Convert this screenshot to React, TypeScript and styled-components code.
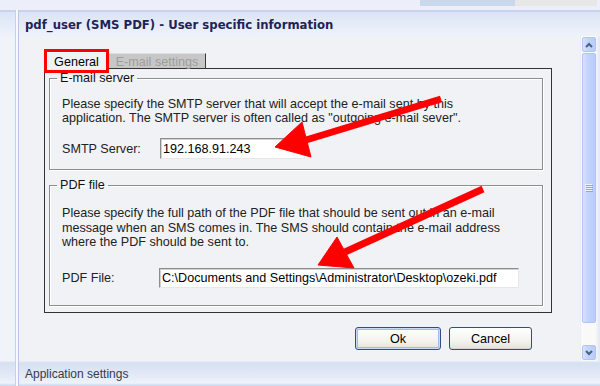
import React from 'react'
import styled, { createGlobalStyle } from 'styled-components'

const Global = createGlobalStyle`
  html, body {
    margin:0;
    padding:0;
  }
  body {
    width:600px;
    height:386px;
    overflow:hidden;
    background:#eef0f9;
    font-family:"Liberation Sans", Arial, sans-serif;
  }
`

const Page = styled.div`
  position:relative;
  width:600px;
  height:386px;
  display:flex;
  flex-direction:column;
  overflow:hidden;
`

const TopStrip = styled.div`
  height:10px;
  flex:none;
  display:flex;
  justify-content:flex-end;
  padding-right:3px;
  background:#eceef9;
`
const TopTab = styled.div<{ $w: number; $bg: string }>`
  width:${(p) => p.$w}px;
  height:6px;
  background:${(p) => p.$bg};
`

const Body = styled.div`
  flex:1;
  display:flex;
  min-height:0;
`

const LeftPane = styled.div`
  width:15px;
  display:flex;
  flex-direction:column;
  background:#f1f3fa;
`
const PaneHead = styled.div`
  height:26px;
  flex:none;
  background:linear-gradient(#c6d4ee 0, #c6d4ee 2px, #dbe4f6 2px, #eef2fa 100%);
`
const PaneFill = styled.div`
  flex:1;
`
const PaneFoot = styled.div`
  height:25px;
  flex:none;
  background:linear-gradient(#e9eef9 0, #d6e0f2 2px, #e4eaf6 60%, #eef2fa 88%, #c9d5ed 100%);
`

const Splitter = styled.div`
  width:4px;
  box-sizing:border-box;
  background:#f7f9fd;
  border-left:1px solid #c4d1ec;
  border-right:1px solid #b7c6e7;
`

const Main = styled.div`
  flex:1;
  display:flex;
  flex-direction:column;
  min-width:0;
`

const Header = styled(PaneHead)`
  display:flex;
  align-items:center;
  padding:3px 0 0 6px;
  box-sizing:border-box;
  font-family:"DejaVu Sans", Verdana, sans-serif;
  font-weight:bold;
  font-size:11.7px;
  color:#1f2356;
`

const ContentRow = styled.div`
  flex:1;
  display:flex;
  min-height:0;
  background:#f1f2f5;
`

const Content = styled.div`
  flex:1;
  padding:16px 0 0 25px;
  font-size:12.6px;
  color:#111;
`

const TabControl = styled.div`
  width:508px;
`

const TabStrip = styled.div`
  display:flex;
  align-items:flex-end;
  height:17px;
`

const Tab = styled.div<{ $active?: boolean }>`
  position:relative;
  box-sizing:border-box;
  display:flex;
  align-items:center;
  justify-content:center;
  height:${(p) => (p.$active ? 17 : 16)}px;
  width:${(p) => (p.$active ? 64 : 97)}px;
  margin-left:${(p) => (p.$active ? 0 : 1)}px;
  background:${(p) => (p.$active ? '#f1f2f5' : '#c7c7c7')};
  color:${(p) => (p.$active ? '#000' : '#9d9d9d')};
  border-left:${(p) => (p.$active ? '1px solid #333' : 'none')};
  border-right:${(p) => (p.$active ? 'none' : '1px solid #3a3a3a')};
  border-bottom:${(p) => (p.$active ? 'none' : '1px solid #333')};
  border-top:1px solid ${(p) => (p.$active ? '#fff' : '#dedede')};
  padding-top:1px;

  ${(p) =>
    p.$active &&
    `
    &::after {
      content:'';
      position:absolute;
      left:-1px;
      right:-1px;
      top:-4px;
      bottom:-4px;
      border:3px solid #f00;
    }
  `}
`

const StripFill = styled.div`
  flex:1;
  height:17px;
  box-sizing:border-box;
  border-bottom:1px solid #333;
`

const Panel = styled.div`
  box-sizing:border-box;
  height:244px;
  border:1px solid #333;
  border-top:none;
  padding:2px 8px 0 4px;
  display:flex;
  flex-direction:column;
  gap:8px;
`

const Group = styled.fieldset<{ $h: number }>`
  margin:0;
  box-sizing:border-box;
  height:${(p) => p.$h}px;
  padding:0 12px;
  border:1px solid #8e8e8e;
  box-shadow:inset 1px 1px 0 #fff, 1px 1px 0 #fff;
  min-width:0;
`

const Legend = styled.legend`
  margin-left:-5px;
  padding:0 3px;
  line-height:14px;
  color:#111;
`

const Para = styled.p<{ $top: number; $lh: number }>`
  margin:${(p) => p.$top}px 0 0;
  line-height:${(p) => p.$lh}px;
  white-space:nowrap;
  color:#222;
`

const FieldRow = styled.div<{ $top: number }>`
  display:flex;
  align-items:center;
  margin-top:${(p) => p.$top}px;
`

const Label = styled.span<{ $w: number }>`
  width:${(p) => p.$w}px;
  flex:none;
  color:#222;
`

const TextBox = styled.div<{ $w: number; $h: number }>`
  box-sizing:border-box;
  width:${(p) => p.$w}px;
  height:${(p) => p.$h}px;
  display:flex;
  align-items:center;
  padding-left:2px;
  background:#fff;
  border:1px solid;
  border-color:#8d8d8d #e7e7e7 #e7e7e7 #8d8d8d;
  box-shadow:inset 1px 1px 0 #d2d2d2;
  color:#000;
  white-space:nowrap;
  overflow:hidden;
`

const ButtonRow = styled.div`
  width:508px;
  display:flex;
  justify-content:flex-end;
  gap:8px;
  box-sizing:border-box;
  padding-right:20px;
  margin-top:14px;
`

const Button = styled.button<{ $w: number; $default?: boolean }>`
  width:${(p) => p.$w}px;
  height:23px;
  padding:0;
  border:1px solid #2d4f86;
  border-radius:3px;
  background:linear-gradient(#ffffff, #f4f3ee 60%, #e4e2da);
  font-family:"Liberation Sans", Arial, sans-serif;
  font-size:12.6px;
  color:#000;
  box-shadow:${(p) =>
    p.$default
      ? 'inset 0 0 0 1px #cbdaf7, inset 0 0 0 2px #9fbcec'
      : 'inset 0 -1px 0 #d8d6cc'};
`

const Scrollbar = styled.div`
  width:16px;
  margin-right:2px;
  display:flex;
  flex-direction:column;
  align-items:center;
  padding:1px 0;
  box-sizing:border-box;
  background:#f9f9f7;
  border-left:1px solid #eceef3;
`

const ScrollPart = styled.div<{ $h: number; $top?: number }>`
  width:14px;
  height:${(p) => p.$h}px;
  margin-top:${(p) => p.$top ?? 0}px;
  box-sizing:border-box;
  border:1px solid #b2c4ef;
  border-radius:2px;
  background:linear-gradient(90deg, #d7e3fd, #c2d4fb 40%, #b9cdf8);
  display:flex;
  align-items:center;
  justify-content:center;
  flex:none;
`

const ScrollGap = styled.div`
  flex:1;
`

const Footer = styled(PaneFoot)`
  display:flex;
  align-items:center;
  padding:1px 0 0 6px;
  box-sizing:border-box;
  font-size:12px;
  color:#333a4c;
`

const EdgeStrip = styled.div`
  width:2px;
  background:#e6eaf5;
`

const Overlay = styled.svg`
  position:absolute;
  left:0;
  top:0;
  pointer-events:none;
`

function Chevron({ up }: { up?: boolean }) {
  return (
    <svg width="8" height="6" viewBox="0 0 8 6">
      <path
        d={up ? 'M1 5 L4 2 L7 5' : 'M1 1 L4 4 L7 1'}
        fill="none"
        stroke="#4d6185"
        strokeWidth="2"
      />
    </svg>
  )
}

function Grip() {
  return (
    <svg width="8" height="8" viewBox="0 0 8 8">
      {[0, 2, 4, 6].map((y) => (
        <g key={y}>
          <line x1="0" y1={y + 0.5} x2="7" y2={y + 0.5} stroke="#eef3fe" />
          <line x1="1" y1={y + 1.5} x2="8" y2={y + 1.5} stroke="#8ca6dc" />
        </g>
      ))}
    </svg>
  )
}

function Arrow({ tail, base, tip, c1, c2 }: {
  tail: [number, number]
  base: [number, number]
  tip: [number, number]
  c1: [number, number]
  c2: [number, number]
}) {
  return (
    <g fill="#f00" stroke="#f00">
      <line x1={tail[0]} y1={tail[1]} x2={base[0]} y2={base[1]} strokeWidth="7" />
      <polygon points={`${tip.join(',')} ${c1.join(',')} ${c2.join(',')}`} strokeWidth="1" />
    </g>
  )
}

export default function App() {
  return (
    <Page>
      <Global />
      <TopStrip>
        <TopTab $w={95} $bg="#cad8eb" />
        <TopTab $w={82} $bg="#e7e7e8" />
      </TopStrip>
      <Body>
        <LeftPane>
          <PaneHead />
          <PaneFill />
          <PaneFoot />
        </LeftPane>
        <Splitter />
        <Main>
          <Header>pdf_user (SMS PDF) - User specific information</Header>
          <ContentRow>
            <Content>
              <TabControl>
                <TabStrip>
                  <Tab $active>General</Tab>
                  <Tab>E-mail settings</Tab>
                  <StripFill />
                </TabStrip>
                <Panel>
                  <Group $h={99}>
                    <Legend>E-mail server</Legend>
                    <Para $top={12} $lh={14}>
                      Please specify the SMTP server that will accept the e-mail sent by this
                      <br />
                      application. The SMTP server is often called as "outgoing e-mail sever".
                    </Para>
                    <FieldRow $top={13}>
                      <Label $w={98}>SMTP Server:</Label>
                      <TextBox $w={145} $h={21}>192.168.91.243</TextBox>
                    </FieldRow>
                  </Group>
                  <Group $h={128}>
                    <Legend>PDF file</Legend>
                    <Para $top={14} $lh={14.5}>
                      Please specify the full path of the PDF file that should be sent out in an e-mail
                      <br />
                      message when an SMS comes in. The SMS should contain the e-mail address
                      <br />
                      where the PDF should be sent to.
                    </Para>
                    <FieldRow $top={18}>
                      <Label $w={97}>PDF File:</Label>
                      <TextBox $w={360} $h={20}>
                        C:\Documents and Settings\Administrator\Desktop\ozeki.pdf
                      </TextBox>
                    </FieldRow>
                  </Group>
                </Panel>
              </TabControl>
              <ButtonRow>
                <Button $w={86} $default>Ok</Button>
                <Button $w={83}>Cancel</Button>
              </ButtonRow>
            </Content>
            <Scrollbar>
              <ScrollPart $h={15}>
                <Chevron up />
              </ScrollPart>
              <ScrollPart $h={270} $top={1}>
                <Grip />
              </ScrollPart>
              <ScrollGap />
              <ScrollPart $h={15}>
                <Chevron />
              </ScrollPart>
            </Scrollbar>
            <EdgeStrip />
          </ContentRow>
          <Footer>Application settings</Footer>
        </Main>
      </Body>
      <Overlay width="600" height="386">
        <Arrow tail={[441, 99]} base={[306, 140]} tip={[275, 147]} c1={[302, 122]} c2={[311, 157]} />
        <Arrow tail={[483, 189]} base={[345, 252]} tip={[318, 265]} c1={[337, 237]} c2={[354, 268]} />
      </Overlay>
    </Page>
  )
}
